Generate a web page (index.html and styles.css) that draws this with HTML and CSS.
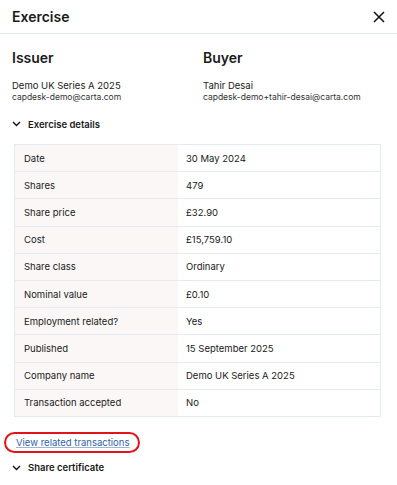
FILE: index.html
```html
<!DOCTYPE html>
<html lang="en">

<head>
    <meta charset="UTF-8">
    <meta name="viewport" content="width=device-width, initial-scale=1.0">
    <title>Exercise</title>
    <link rel="stylesheet" href="styles.css">
</head>

<body>
    <div class="panel">
        <div class="panel-header">
            <h1>Exercise</h1>
            <button class="close" aria-label="Close">
                <svg width="12" height="12" viewBox="0 0 12 12">
                    <path d="M1 1 L11 11 M11 1 L1 11" stroke="#111" stroke-width="1.5" fill="none" />
                </svg>
            </button>
        </div>

        <div class="panel-body">
            <div class="parties">
                <div class="party">
                    <h2>Issuer</h2>
                    <div class="party-name">Demo UK Series A 2025</div>
                    <div class="party-email">capdesk-demo@carta.com</div>
                </div>
                <div class="party">
                    <h2>Buyer</h2>
                    <div class="party-name">Tahir Desai</div>
                    <div class="party-email">capdesk-demo+tahir-desai@carta.com</div>
                </div>
            </div>

            <div class="section-toggle">
                <svg class="chevron" width="9" height="6" viewBox="0 0 9 6">
                    <path d="M1 1 L4.5 4.5 L8 1" stroke="#111" stroke-width="1.4" fill="none" />
                </svg>
                <span>Exercise details</span>
            </div>

            <table class="details">
                <tbody>
                    <tr><th>Date</th><td>30 May 2024</td></tr>
                    <tr><th>Shares</th><td>479</td></tr>
                    <tr><th>Share price</th><td>£32.90</td></tr>
                    <tr><th>Cost</th><td>£15,759.10</td></tr>
                    <tr><th>Share class</th><td>Ordinary</td></tr>
                    <tr><th>Nominal value</th><td>£0.10</td></tr>
                    <tr><th>Employment related?</th><td>Yes</td></tr>
                    <tr><th>Published</th><td>15 September 2025</td></tr>
                    <tr><th>Company name</th><td>Demo UK Series A 2025</td></tr>
                    <tr><th>Transaction accepted</th><td>No</td></tr>
                </tbody>
            </table>

            <div class="related">
                <a href="#" class="related-link">View related transactions</a>
            </div>

            <div class="section-toggle">
                <svg class="chevron" width="9" height="6" viewBox="0 0 9 6">
                    <path d="M1 1 L4.5 4.5 L8 1" stroke="#111" stroke-width="1.4" fill="none" />
                </svg>
                <span>Share certificate</span>
            </div>
        </div>
    </div>
</body>

</html>
```

FILE: styles.css
```css
body {
    font-family: Inter, "Noto Sans", sans-serif;
    background-color: #fff;
    color: #1a1a1a;
    margin: 0;
}

.panel-header {
    display: flex;
    align-items: center;
    justify-content: space-between;
    height: 33px;
    padding: 0 10px 0 12px;
    border-bottom: 1px solid #e3eaf1;
}

.panel-header h1 {
    margin: 0;
    font-size: 14px;
    font-weight: 600;
}

.close {
    background: none;
    border: none;
    padding: 0;
    width: 16px;
    height: 16px;
    display: flex;
    align-items: center;
    justify-content: center;
    cursor: pointer;
}

.panel-body {
    padding: 14px 16px 0 10px;
}

.parties {
    display: grid;
    grid-template-columns: 191px 1fr;
}

.party {
    padding-left: 2px;
}

.party h2 {
    margin: 0 0 12px;
    font-size: 14px;
    font-weight: 600;
    line-height: 20px;
}

.party-name {
    font-size: 9.5px;
    line-height: 12px;
}

.party-email {
    font-size: 8.5px;
    line-height: 11px;
    color: #333;
}

.section-toggle {
    display: flex;
    align-items: center;
    gap: 7px;
    font-size: 9.5px;
    font-weight: 600;
    height: 20px;
    margin-top: 11px;
    padding-left: 2px;
}

.details {
    width: 367px;
    margin: 10px 0 0 4px;
    border-collapse: collapse;
    font-size: 9.5px;
    border: 1px solid #e3eaf1;
}

.details th,
.details td {
    height: 26.2px;
    padding: 0 9px;
    text-align: left;
    border-bottom: 1px solid #e3eaf1;
}

.details th {
    width: 145px;
    font-weight: 400;
    background-color: #fbf7f6;
}

.details td {
    padding-left: 8px;
}

.related {
    margin-top: 13px;
}

.related-link {
    display: inline-block;
    color: #2e5fae;
    font-size: 9.5px;
    text-decoration: underline;
    text-decoration-color: #9fb3d6;
    padding: 3px 9px 3px 10px;
    margin-left: -6px;
    border: 2px solid #e2141b;
    border-radius: 12px;
}

.related + .section-toggle {
    margin-top: 5px;
}
```
